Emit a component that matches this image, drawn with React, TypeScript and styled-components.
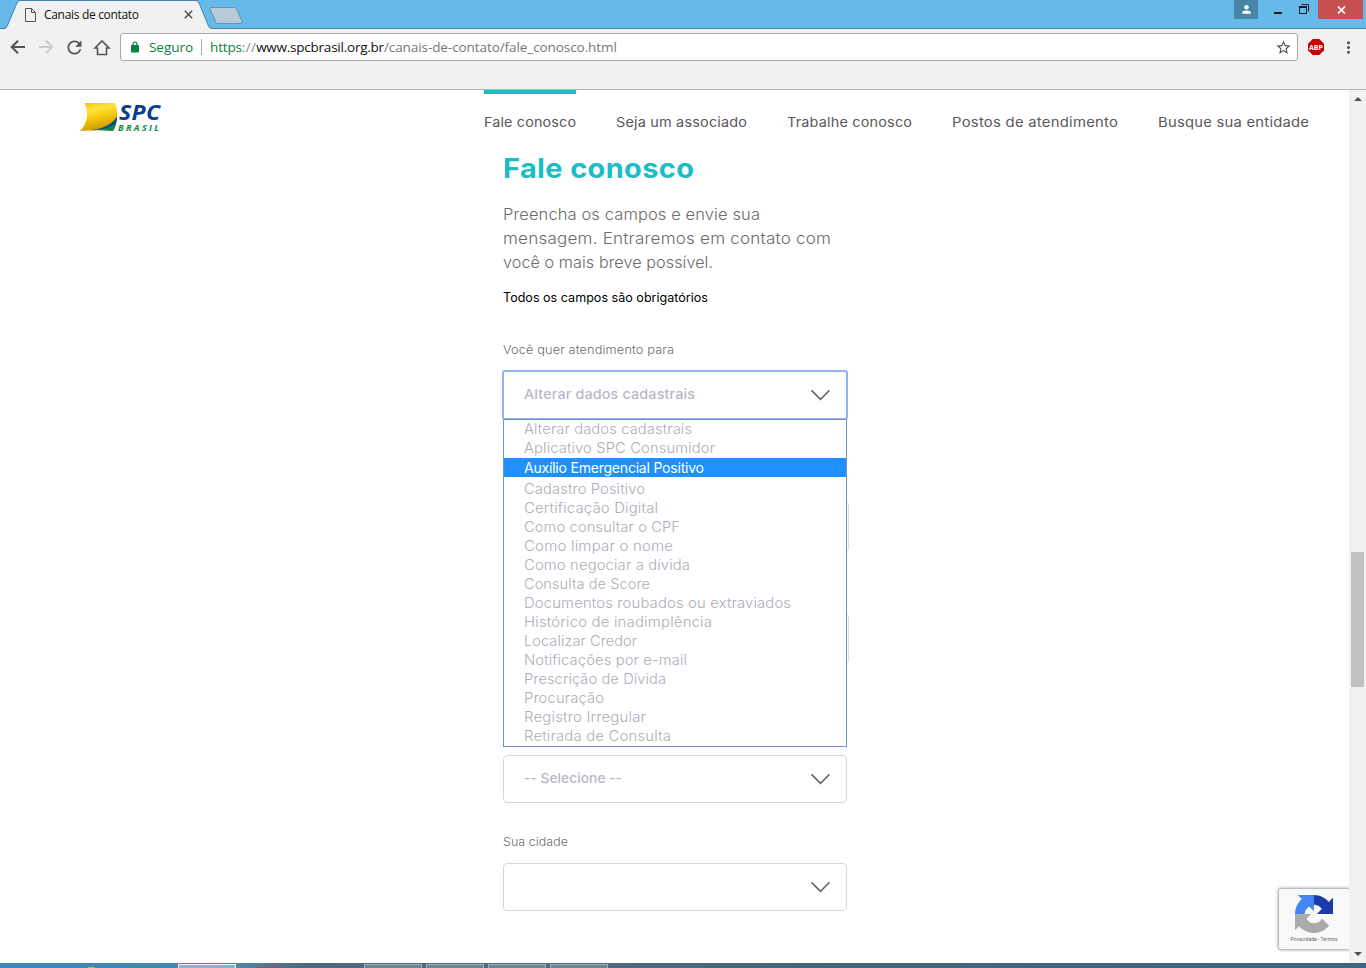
import React, { useLayoutEffect, useRef } from 'react';
import styled, { createGlobalStyle, css } from 'styled-components';
import { MdStarBorder, MdMoreVert, MdPerson, MdRefresh } from 'react-icons/md';

const GlobalStyle = createGlobalStyle`
  * { box-sizing: border-box; }
  body {
    margin: 0;
    width: 1366px;
    height: 968px;
    overflow: hidden;
    background: #fff;
    font-family: Inter, "Open Sans", sans-serif;
  }
`;

const FittedText = styled.span`
  display: inline-block;
  white-space: nowrap;
  transform-origin: left center;
`;

/*
 * One line of text that spans a given width. By default only the tracking
 * changes; `wide` also widens the letters, for the page's wide typeface.
 */
function Fit({ w, wide, children }: { w: number; wide?: boolean; children: string }) {
  const ref = useRef<HTMLSpanElement>(null);
  useLayoutEffect(() => {
    const el = ref.current;
    if (!el) return;
    el.style.letterSpacing = '0px';
    el.style.transform = 'none';
    const natural = el.getBoundingClientRect().width;
    const scale = wide ? Math.pow(w / natural, 0.75) : 1;
    el.style.letterSpacing = `${(w / scale - natural) / (children.length - 1)}px`;
    if (wide) el.style.transform = `scaleX(${scale})`;
  }, [w, wide, children]);
  return <FittedText ref={ref}>{children}</FittedText>;
}

const Window = styled.div`
  display: flex;
  flex-direction: column;
  width: 1366px;
  height: 968px;
  overflow: hidden;
`;

/* ---------- browser chrome ---------- */

const TitleBar = styled.div`
  display: flex;
  align-items: flex-start;
  height: 29px;
  background: linear-gradient(#66baea 0 28px, #4a84a8 28px);
`;

const Tab = styled.div`
  position: relative;
  display: flex;
  align-items: center;
  width: 209px;
  height: 29px;
  padding-left: 25px;
  font: 12px "Open Sans", sans-serif;
  color: #111;
`;

const TabShape = styled.svg`
  position: absolute;
  left: 0;
  top: 0;
`;

const TabLabel = styled.div`
  position: relative;
  display: flex;
  align-items: center;
  flex: 1;
  height: 29px;
`;

const TabTitle = styled.div`
  width: 140px;
  margin-left: 8px;
  padding-top: 1px;
  line-height: 28px;
`;

const TabIcon = styled.svg`
  flex: none;
  margin-top: 1px;
`;

const NewTab = styled.svg`
  position: relative;
  margin-top: 6px;
`;

const WindowButtons = styled.div`
  display: flex;
  height: 19px;
  margin-left: auto;
  padding-right: 3px;
`;

const WindowButton = styled.div<{ $w: number; $bg?: string }>`
  display: flex;
  align-items: center;
  justify-content: center;
  width: ${p => p.$w}px;
  height: 19px;
  padding-left: ${p => (p.$bg ? 1 : 0)}px;
  background: ${p => p.$bg ?? 'transparent'};
  color: #fff;
`;

const Toolbar = styled.div`
  display: flex;
  align-items: flex-start;
  height: 61px;
  padding: 4px 4px 0 4px;
  background: #f1f1f1;
  border-bottom: 1px solid #b4b4b4;
`;

const ToolButton = styled.div<{ $color?: string }>`
  display: flex;
  align-items: center;
  justify-content: center;
  width: 28px;
  height: 28px;
  color: ${p => p.$color ?? '#555'};
`;

const MenuButton = styled(ToolButton)`
  margin-left: auto;
`;

const AddressBar = styled.div`
  display: flex;
  align-items: center;
  width: 1178px;
  height: 28px;
  margin-left: 4px;
  padding: 0 5px 0 10px;
  background: #fff;
  border: 1px solid #a9a9a9;
  border-radius: 3px;
  font: 13.5px "Open Sans", sans-serif;
  color: #777;
`;

const Secure = styled.span`
  flex: none;
  width: 61px;
  padding-left: 9px;
  color: #0b8043;
`;

const UrlDivider = styled.span`
  flex: none;
  width: 1px;
  height: 16px;
  margin: 0 8px 0 0;
  background: #aaa;
`;

const Url = styled.div`
  display: flex;
  flex: 1;
`;

const UrlPart = styled.span<{ $color: string }>`
  color: ${p => p.$color};
`;

const AdBlock = styled.div`
  display: flex;
  align-items: center;
  justify-content: center;
  width: 16px;
  height: 28px;
  margin-left: 10px;
  position: relative;
`;

const AdBlockText = styled.span`
  position: absolute;
  font: bold 7px "Open Sans", sans-serif;
  color: #fff;
`;

/* ---------- page ---------- */

const Viewport = styled.div`
  display: flex;
  height: 873px;
`;

const Page = styled.main`
  position: relative;
  width: 1349px;
  background: #fff;
`;

const Header = styled.header`
  display: flex;
  justify-content: space-between;
  height: 60px;
  padding: 0 40px 0 80px;
`;

const Logo = styled.div`
  display: flex;
  align-items: flex-start;
  padding-top: 12px;
`;

const LogoWords = styled.div`
  display: flex;
  flex-direction: column;
  margin: -1px 0 0 1px;
  font-family: "Open Sans", sans-serif;
  font-style: italic;
  font-weight: 700;
`;

const LogoName = styled.span`
  height: 20px;
  font-size: 22px;
  line-height: 20px;
  color: #0a3f8c;
`;

const LogoCountry = styled.span`
  height: 12px;
  margin: 1px 0 0 -1px;
  font-size: 9px;
  line-height: 12px;
  color: #0a8a4a;
`;

const Nav = styled.nav`
  display: flex;
  gap: 40px;
`;

const NavItem = styled.a<{ $active?: boolean; $w: number }>`
  width: ${p => p.$w}px;
  height: 60px;
  border-top: 4px solid ${p => (p.$active ? '#1bbdc6' : 'transparent')};
  font-size: 13.5px;
  line-height: 57px;
  color: #58585a;
`;

const Form = styled.form`
  width: 344px;
  margin-left: 503px;
`;

const Title = styled.h1`
  margin: 0;
  padding-top: 1px;
  font-size: 27px;
  line-height: 36px;
  font-weight: 700;
  color: #1bbdc6;
`;

const Intro = styled.p`
  display: flex;
  flex-direction: column;
  align-items: flex-start;
  margin: 15px 0 14px;
  font-size: 16px;
  line-height: 24px;
  font-weight: 300;
  color: #6c6c6c;
`;

const Note = styled.p`
  margin: 0 0 32px;
  font-size: 12.5px;
  line-height: 20px;
  color: #000;
`;

const Label = styled.label`
  display: block;
  height: 20px;
  margin: 0 0 11px;
  font-size: 12px;
  line-height: 20px;
  font-weight: 300;
  color: #6c6c6c;
`;

const Select = styled.div<{ $focused?: boolean }>`
  position: relative;
  display: flex;
  align-items: center;
  justify-content: space-between;
  height: 48px;
  padding: 0 15px 0 20px;
  border: 1px solid #d6d7e3;
  border-radius: 4px;
  background: #fff;
  font-size: 13.5px;
  font-weight: 500;
  color: #b9b9c5;
  ${p =>
    p.$focused &&
    css`
      border-color: #8fb4f3;
      border-radius: 2px;
      box-shadow: 0 0 0 1px #8fb4f3;
    `}
`;

const SelectValue = styled.span`
  padding-bottom: 2px;
`;

const Input = styled.div`
  width: 346px;
  height: 51px;
  margin-bottom: 61px;
  border: 1px solid #dcdde6;
  border-radius: 4px;
`;

const Fields = styled.div`
  display: flex;
  flex-direction: column;
  padding: 82px 0 30px;
`;

const CityLabel = styled(Label)`
  margin-top: 29px;
`;

const Menu = styled.ul`
  position: absolute;
  z-index: 2;
  left: -1px;
  top: 47px;
  width: 344px;
  height: 328px;
  margin: 0;
  padding: 0;
  list-style: none;
  background: #fff;
  border: 1px solid #6e93c4;
`;

const Option = styled.li<{ $active?: boolean }>`
  height: 19px;
  padding-left: 20px;
  font-size: 14px;
  line-height: 19px;
  font-weight: 300;
  color: #adadb8;
  &:nth-child(-n + 2) {
    line-height: 17px;
  }
  ${p =>
    p.$active &&
    css`
      margin-bottom: 2px;
      font-weight: 400;
      background: #1e90ff;
      color: #fff;
    `}
`;

const Captcha = styled.div`
  position: absolute;
  right: 0;
  top: 799px;
  display: flex;
  flex-direction: column;
  align-items: center;
  width: 70px;
  height: 60px;
  padding-top: 6px;
  background: #f9f9f9;
  border-radius: 2px 0 0 2px;
  box-shadow: 0 0 3px 1px #999;
  clip-path: inset(-5px 0 -5px -5px);
  font: 5px/12px Roboto, sans-serif;
  color: #666;
`;

const Scrollbar = styled.div`
  display: flex;
  flex-direction: column;
  align-items: center;
  justify-content: space-between;
  width: 17px;
  padding: 7px 0 7px;
  background: #f1f1f1;
`;

const Thumb = styled.div`
  width: 13px;
  height: 135px;
  margin-top: 186px;
  background: #c1c1c1;
`;

const Taskbar = styled.div`
  display: flex;
  gap: 4px;
  height: 5px;
  padding: 1px 0 0 178px;
  background:
    linear-gradient(#c3b73f, #c3b73f) 88px 4px / 7px 1px no-repeat,
    linear-gradient(#3a9270, #3a9270) 130px 4px / 29px 1px no-repeat,
    linear-gradient(#8c5560, #8c5560) 256px 4px / 27px 1px no-repeat,
    linear-gradient(90deg, #3f87bb 0, #4088b9 170px, #5685a3 240px, #50697c 300px, #526a7b 620px, #476579 800px, #3f6680 1366px);
`;

const TaskButton = styled.div<{ $active?: boolean }>`
  width: 58px;
  height: 5px;
  border: solid ${p => (p.$active ? '#f2f8fc' : '#9fb0ba')};
  border-width: 1px 1px 0;
  background: ${p => (p.$active ? '#88b4d1' : '#72858f')};
  margin-right: ${p => (p.$active ? '124px' : '0')};
`;

const navItems = [
  { text: 'Fale conosco', w: 92 },
  { text: 'Seja um associado', w: 131 },
  { text: 'Trabalhe conosco', w: 125 },
  { text: 'Postos de atendimento', w: 166 },
  { text: 'Busque sua entidade', w: 151 },
];

const options: [string, number][] = [
  ['Alterar dados cadastrais', 168],
  ['Aplicativo SPC Consumidor', 191],
  ['Auxílio Emergencial Positivo', 180],
  ['Cadastro Positivo', 121],
  ['Certificação Digital', 134],
  ['Como consultar o CPF', 156],
  ['Como limpar o nome', 149],
  ['Como negociar a dívida', 166],
  ['Consulta de Score', 126],
  ['Documentos roubados ou extraviados', 267],
  ['Histórico de inadimplência', 188],
  ['Localizar Credor', 113],
  ['Notificações por e-mail', 163],
  ['Prescrição de Dívida', 142],
  ['Procuração', 80],
  ['Registro Irregular', 122],
  ['Retirada de Consulta', 147],
];

const Chevron = () => (
  <svg width="20" height="12" viewBox="0 0 20 12" fill="none" stroke="#666" strokeWidth="1.6">
    <path d="M.5 1.300 L9.500 10.300 L18.500 1.300" />
  </svg>
);

const Arrow = ({ flip }: { flip?: boolean }) => (
  <svg width="16" height="16" viewBox="0 0 16 16" fill="none" stroke="currentColor" strokeWidth="2">
    <path d={flip ? 'M1 8H14M8 1.7L14.3 8L8 14.3' : 'M15 8H2M8 1.7L1.7 8L8 14.3'} />
  </svg>
);

const Triangle = ({ down }: { down?: boolean }) => (
  <svg width="8" height="4" viewBox="0 0 8 4" fill="#505050">
    <path d={down ? 'M0 0H8L4 4Z' : 'M0 4H8L4 0Z'} />
  </svg>
);

export default function App() {
  return (
    <Window>
      <GlobalStyle />
      <TitleBar>
        <Tab>
          <TabShape width="216" height="29" viewBox="0 0 216 29">
            <path d="M5 29 C7 28 7.500 26 8.500 24 L17 3 Q18 1 20 1 H196 Q198 1 199 3 L208 25 Q209.500 28.500 212 29 Z" fill="#f1f1f1" />
            <path d="M0 28.500 H4 Q6 28.500 7 26 L17 3 Q18 .5 20 .5 H196 Q198 .5 199 3 L208.500 26 Q209.500 28.500 212 28.500 H216" fill="none" stroke="#4784aa" />
          </TabShape>
          <TabLabel>
            <TabIcon width="11" height="14" viewBox="0 0 11 14" fill="none" stroke="#555">
              <path d="M.5 .5H6.500L10.500 4.500V13.500H.5ZM6.500 .5V4.500H10.500" />
            </TabIcon>
            <TabTitle><Fit w={95}>Canais de contato</Fit></TabTitle>
            <svg width="9" height="9" viewBox="0 0 9 9" stroke="#505050" strokeWidth="1.5">
              <path d="M.8 .8L8.200 8.200M8.200 .8L.8 8.200" />
            </svg>
          </TabLabel>
        </Tab>
        <NewTab width="35" height="19" viewBox="0 0 35 19">
          <path d="M2 1.500H25.500Q27 1.500 27.500 2.500L33 15.500Q33.700 17.500 32 17.500H9Q7.500 17.500 7 16.500L1 3Q.5 1.500 2 1.500Z" fill="#b7cbd7" stroke="#5796bd" />
        </NewTab>
        <WindowButtons>
          <WindowButton $w={24} $bg="#4985a8">
            <svg width="9" height="9" viewBox="0 0 9 9" fill="#fff">
              <circle cx="4.500" cy="2.200" r="2.200" />
              <path d="M.3 8.700V7.500Q.3 5.400 4.500 5.400T8.700 7.500V8.700Z" />
            </svg>
          </WindowButton>
          <WindowButton $w={40}>
            <svg width="8" height="14" viewBox="0 0 8 14" fill="#1c1c1c"><rect y="9" width="8" height="2" /></svg>
          </WindowButton>
          <WindowButton $w={20}>
            <svg width="20" height="19" viewBox="0 0 20 19" fill="none" stroke="#1c1c1c">
              <path d="M3.500 4.500H10.500V11.500" />
              <rect x="1.500" y="6.500" width="7" height="7" />
              <path d="M1 7H9" strokeWidth="2" />
            </svg>
          </WindowButton>
          <WindowButton $w={45} $bg="#c75050">
            <svg width="9" height="8" viewBox="0 0 9 8" stroke="#fff" strokeWidth="1.700">
              <path d="M1 .5L8 7.500M8 .5L1 7.500" />
            </svg>
          </WindowButton>
        </WindowButtons>
      </TitleBar>
      <Toolbar>
        <ToolButton><Arrow /></ToolButton>
        <ToolButton $color="#ccc"><Arrow flip /></ToolButton>
        <ToolButton><MdRefresh size={21} /></ToolButton>
        <ToolButton>
          <svg width="18" height="17" viewBox="0 0 18 17" fill="none" stroke="currentColor" strokeWidth="1.600">
            <path d="M2 9L9 2L16 9H13.500V15.500H4.500V9Z" />
          </svg>
        </ToolButton>
        <AddressBar>
          <svg width="9" height="12" viewBox="0 0 9 12" fill="#0b8043">
            <rect y="4" width="8" height="7.500" rx=".8" />
            <path d="M2 4.500V3.200A2 2.200 0 0 1 6 3.200V4.500" fill="none" stroke="#0b8043" strokeWidth="1.200" />
          </svg>
          <Secure><Fit w={44}>Seguro</Fit></Secure>
          <UrlDivider />
          <Url>
            <UrlPart $color="#0b8043"><Fit w={32}>https</Fit></UrlPart>
            <UrlPart $color="#888"><Fit w={14}>://</Fit></UrlPart>
            <UrlPart $color="#111"><Fit w={128}>www.spcbrasil.org.br</Fit></UrlPart>
            <UrlPart $color="#777"><Fit w={233}>/canais-de-contato/fale_conosco.html</Fit></UrlPart>
          </Url>
          <MdStarBorder size={17} color="#555" />
        </AddressBar>
        <AdBlock>
          <svg width="16" height="16" viewBox="0 0 16 16" fill="#c80000">
            <path d="M4.700 0H11.300L16 4.700V11.300L11.300 16H4.700L0 11.300V4.700Z" />
          </svg>
          <AdBlockText><Fit w={14}>ABP</Fit></AdBlockText>
        </AdBlock>
        <MenuButton><MdMoreVert size={19} /></MenuButton>
      </Toolbar>

      <Viewport>
        <Page>
          <Header>
            <Logo>
              <svg width="38" height="30" viewBox="0 0 38 30">
                <defs>
                  <linearGradient id="gold" x1="0" y1="0" x2=".3" y2="1">
                    <stop offset="0" stopColor="#f0bd00" />
                    <stop offset=".3" stopColor="#ffe23e" />
                    <stop offset=".6" stopColor="#f3cb0c" />
                    <stop offset="1" stopColor="#d09a00" />
                  </linearGradient>
                </defs>
                <path d="M4.500 1H35Q38.500 9 36.500 19Q35.500 25 33 28.800Q17 27.500 0 29Q6 23 7 14Q7.500 7 4.500 1Z" fill="url(#gold)" />
                <path d="M37.200 14Q36.500 24 33 28.800Q22 27.500 12 28Q31 25.500 37.200 14Z" fill="#0a4a8c" />
                <path d="M36 21Q35 26 33 28.800Q20 27.500 8 28.300Q29 28 36 21Z" fill="#0a8a4a" />
              </svg>
              <LogoWords>
                <LogoName><Fit w={41} wide>SPC</Fit></LogoName>
                <LogoCountry><Fit w={41}>BRASIL</Fit></LogoCountry>
              </LogoWords>
            </Logo>
            <Nav>
              {navItems.map((item, i) => (
                <NavItem key={item.text} $w={item.w} $active={i === 0}>
                  <Fit w={item.w} wide>{item.text}</Fit>
                </NavItem>
              ))}
            </Nav>
          </Header>

          <Form>
            <Title><Fit w={191} wide>Fale conosco</Fit></Title>
            <Intro>
              <Fit w={257} wide>Preencha os campos e envie sua</Fit>
              <Fit w={328} wide>mensagem. Entraremos em contato com</Fit>
              <Fit w={210} wide>você o mais breve possível.</Fit>
            </Intro>
            <Note><Fit w={205} wide>Todos os campos são obrigatórios</Fit></Note>
            <Label><Fit w={171} wide>Você quer atendimento para</Fit></Label>
            <Select $focused>
              <SelectValue><Fit w={171} wide>Alterar dados cadastrais</Fit></SelectValue>
              <Chevron />
              <Menu>
                {options.map(([text, w], i) => (
                  <Option key={text} $active={i === 2}><Fit w={w} wide={i !== 2}>{text}</Fit></Option>
                ))}
              </Menu>
            </Select>
            <Fields>
              <Input />
              <Input />
            </Fields>
            <Select>
              <SelectValue><Fit w={98} wide>-- Selecione --</Fit></SelectValue>
              <Chevron />
            </Select>
            <CityLabel><Fit w={65} wide>Sua cidade</Fit></CityLabel>
            <Select>
              <SelectValue />
              <Chevron />
            </Select>
          </Form>

          <Captcha>
            <svg width="38" height="38" viewBox="0 0 64 64">
              <path fill="#1c3aa9" d="M64 31.955l-.033-1.370V4.687l-7.160 7.160C50.948 4.674 42.033.093 32.050.093c-10.400 0-19.622 4.960-25.458 12.640l11.736 11.860a15.550 15.550 0 0 1 4.754-5.334c2.050-1.600 4.952-2.906 8.968-2.906.485 0 .860.057 1.135.163 4.976.393 9.288 3.140 11.828 7.124l-8.307 8.307L64 31.953" />
              <path fill="#4285f4" d="M31.862.094l-1.370.033H4.594l7.160 7.160C4.580 13.147 0 22.060 0 32.046c0 10.400 4.960 19.622 12.640 25.458L24.500 45.768a15.550 15.550 0 0 1-5.334-4.754c-1.600-2.050-2.906-4.952-2.906-8.968 0-.485.057-.860.163-1.135.393-4.976 3.140-9.288 7.124-11.828l8.307 8.307L31.860.095" />
              <path fill="#ababab" d="M.001 32.045l.033 1.370v25.898l7.160-7.160c5.860 7.173 14.774 11.754 24.760 11.754 10.400 0 19.622-4.960 25.458-12.640l-11.736-11.860a15.550 15.550 0 0 1-4.754 5.334c-2.050 1.600-4.952 2.906-8.968 2.906-.485 0-.860-.057-1.135-.163-4.976-.393-9.288-3.140-11.828-7.124l8.307-8.307c-10.522.040-22.400.066-27.295-.005" />
            </svg>
            <Fit w={47}>Privacidade - Termos</Fit>
          </Captcha>
        </Page>
        <Scrollbar>
          <Triangle />
          <Thumb />
          <Triangle down />
        </Scrollbar>
      </Viewport>

      <Taskbar>
        <TaskButton $active />
        <TaskButton />
        <TaskButton />
        <TaskButton />
        <TaskButton />
      </Taskbar>
    </Window>
  );
}
